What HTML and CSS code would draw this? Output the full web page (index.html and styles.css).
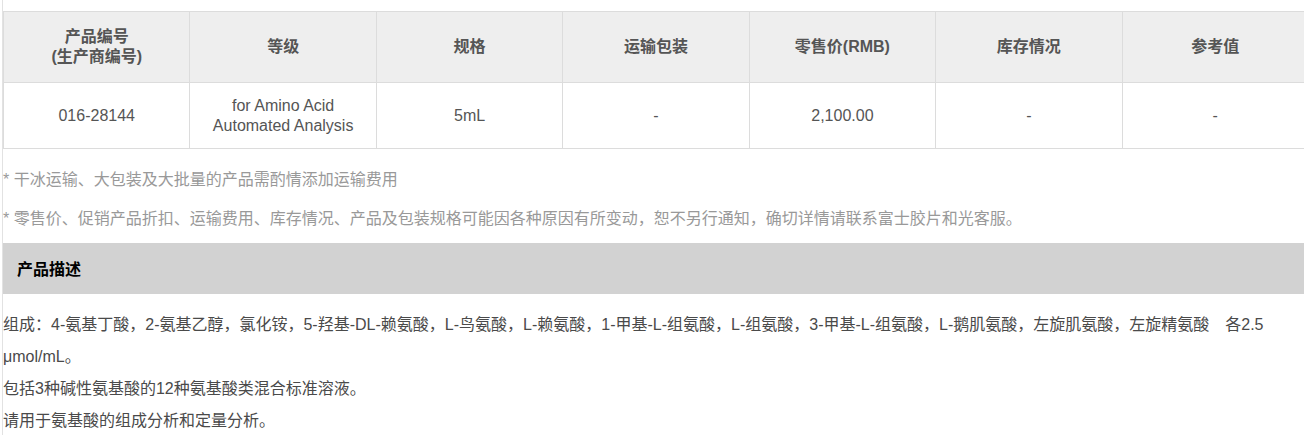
FILE: index.html
```html
<!DOCTYPE html>
<html lang="zh-CN">
<head>
<meta charset="utf-8">
<title>产品详情</title>
<link rel="stylesheet" href="styles.css">
</head>
<body>
<div class="page">
  <table class="spec">
    <thead>
      <tr>
        <th>产品编号<br>(生产商编号)</th>
        <th>等级</th>
        <th>规格</th>
        <th>运输包装</th>
        <th>零售价(RMB)</th>
        <th>库存情况</th>
        <th>参考值</th>
      </tr>
    </thead>
    <tbody>
      <tr>
        <td>016-28144</td>
        <td>for Amino Acid<br>Automated Analysis</td>
        <td>5mL</td>
        <td>-</td>
        <td>2,100.00</td>
        <td>-</td>
        <td>-</td>
      </tr>
    </tbody>
  </table>
  <p class="note">* 干冰运输、大包装及大批量的产品需酌情添加运输费用</p>
  <p class="note">* 零售价、促销产品折扣、运输费用、库存情况、产品及包装规格可能因各种原因有所变动，恕不另行通知，确切详情请联系富士胶片和光客服。</p>
  <div class="section-title">产品描述</div>
  <div class="desc">
    <p>组成：4-氨基丁酸，2-氨基乙醇，氯化铵，5-羟基-DL-赖氨酸，L-鸟氨酸，L-赖氨酸，1-甲基-L-组氨酸，L-组氨酸，3-甲基-L-组氨酸，L-鹅肌氨酸，左旋肌氨酸，左旋精氨酸　各2.5 μmol/mL。</p>
    <p>包括3种碱性氨基酸的12种氨基酸类混合标准溶液。</p>
    <p>请用于氨基酸的组成分析和定量分析。</p>
  </div>
</div>
</body>
</html>
```

FILE: styles.css
```css
html, body {
  margin: 0;
  padding: 0;
  background: #fff;
  overflow: hidden;
}
body {
  font-family: "Liberation Sans", Arial, "Noto Sans CJK SC", sans-serif;
  font-size: 16px;
  color: #555;
}
.page {
  margin-left: 2px;
  border-left: 1px solid #e2e2e2;
  padding-top: 11px;
  width: 1310px;
  min-height: 435px;
}
.spec {
  width: 1306px;
  border-collapse: collapse;
  table-layout: fixed;
}
.spec th, .spec td {
  border: 1px solid #dcdcdc;
  text-align: center;
  vertical-align: middle;
  line-height: 20px;
  font-size: 16px;
}
.spec th {
  background: #eee;
  color: #555;
  font-weight: bold;
  height: 71px;
  padding: 0 8px;
  box-sizing: border-box;
}
.spec td {
  height: 66px;
  padding: 0 8px;
  box-sizing: border-box;
}
.note {
  margin: 0;
  color: #999;
  font-size: 16px;
  line-height: 20px;
}
.note:first-of-type {
  margin-top: 21px;
}
.note + .note {
  margin-top: 19px;
}
.section-title {
  margin-top: 14px;
  width: 1301px;
  height: 51px;
  background: #d2d2d2;
  color: #000;
  font-weight: bold;
  font-size: 16px;
  line-height: 20px;
  padding: 17px 14px 14px;
  box-sizing: border-box;
}
.desc {
  margin-top: 15px;
  width: 1301px;
}
.desc p {
  margin: 0;
  line-height: 32px;
  color: #4a4a4a;
}
```
